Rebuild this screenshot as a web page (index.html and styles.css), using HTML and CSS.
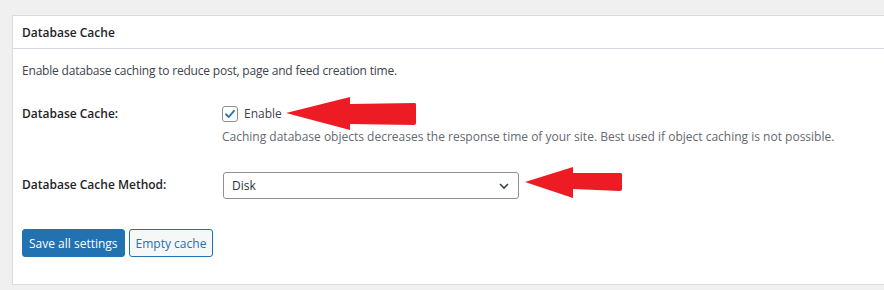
FILE: index.html
```html
<!DOCTYPE html>
<html lang="en">
<head>
  <meta charset="UTF-8" />
  <title>Database Cache</title>
  <link rel="stylesheet" href="styles.css">
</head>
<body>
  <div class="postbox">
    <h3 class="postbox-title">Database Cache</h3>
    <div class="inside">
      <p class="intro">Enable database caching to reduce post, page and feed creation time.</p>

      <div class="form-row row-enable">
        <div class="row-label">Database Cache:</div>
        <div class="row-field">
          <label class="check">
            <span class="checkbox">
              <svg width="12" height="12" viewBox="0 0 12 12"><path d="M2 6.3 L4.8 9 L10 2.8" fill="none" stroke="#2271b1" stroke-width="1.8" stroke-linecap="round" stroke-linejoin="round"/></svg>
            </span>
            Enable
          </label>
          <p class="description">Caching database objects decreases the response time of your site. Best used if object caching is not possible.</p>
        </div>
      </div>

      <div class="form-row row-method">
        <div class="row-label">Database Cache Method:</div>
        <div class="row-field">
          <div class="select">
            <span>Disk</span>
            <svg width="12" height="8" viewBox="0 0 12 8"><path d="M2 2 L6 6 L10 2" fill="none" stroke="#3c434a" stroke-width="1.6"/></svg>
          </div>
        </div>
      </div>

      <div class="actions">
        <button class="button button-primary">Save all settings</button>
        <button class="button">Empty cache</button>
      </div>
    </div>

    <!-- red annotation arrows -->
    <svg class="arrow arrow-one" width="132" height="34" viewBox="0 0 132 34">
      <path d="M0 16 L64 0 L64 7 L129 6 Q130 6 130 8 L130 26 Q130 28 128 28 L64 27 L64 33 Z" fill="#ed1c24"/>
    </svg>
    <svg class="arrow arrow-two" width="100" height="32" viewBox="0 0 100 32">
      <path d="M0 15 L48 0 L48 6 L96 6 Q97 6 97 8 L97 22 Q97 24 95 24 L48 22 L48 31 Z" fill="#ed1c24"/>
    </svg>
  </div>
</body>
</html>
```

FILE: styles.css
```css
body {
  margin: 0;
  padding: 15px 0 0 12px;
  background: #f0f0f1;
  font-family: 'Open Sans', sans-serif;
  font-size: 12px;
  color: #3c434a;
}

.postbox {
  position: relative;
  background: #fff;
  border: 1px solid #dcdcde;
  border-right: none;
  box-shadow: 0 1px 1px rgba(0,0,0,0.06);
  height: 270px;
  box-sizing: border-box;
}

.postbox-title {
  margin: 0;
  height: 32px;
  line-height: 34px;
  padding: 0 9px;
  font-size: 12px;
  font-weight: 600;
  color: #1d2327;
  border-bottom: 1px solid #d5d8de;
}

.inside {
  padding: 0 9px;
}

.intro {
  margin: 13px 0 0;
  line-height: 18px;
  letter-spacing: -0.2px;
}

.form-row {
  display: grid;
  grid-template-columns: 200px 1fr;
}

.row-label {
  font-weight: 600;
  color: #1d2327;
  line-height: 18px;
}

.row-enable {
  margin-top: 25px;
}

.check {
  display: flex;
  align-items: center;
  gap: 6px;
  line-height: 18px;
  color: #3c434a;
}

.checkbox {
  width: 14px;
  height: 14px;
  border: 1px solid #8c8f94;
  border-radius: 3px;
  display: flex;
  align-items: center;
  justify-content: center;
}

.description {
  margin: 5px 0 0;
  line-height: 18px;
  color: #646970;
}

.row-method {
  margin-top: 26px;
}

.row-method .row-label {
  padding-top: 4px;
}

.select {
  width: 278px;
  height: 25px;
  border: 1px solid #8c8f94;
  border-radius: 3px;
  display: flex;
  align-items: center;
  justify-content: space-between;
  padding: 0 8px;
  color: #2c3338;
  margin-left: 1px;
}

.actions {
  margin-top: 30px;
  display: flex;
  gap: 4px;
}

.button {
  font-family: inherit;
  font-size: 12px;
  height: 28px;
  padding: 0 6px;
  border: 1px solid #2271b1;
  border-radius: 3px;
  background: #f6f7f7;
  color: #2271b1;
}

.button-primary {
  background: #2271b1;
  color: #fff;
}

.arrow {
  position: absolute;
}

.arrow-one {
  left: 273px;
  top: 81px;
}

.arrow-two {
  left: 512px;
  top: 151px;
}
```
